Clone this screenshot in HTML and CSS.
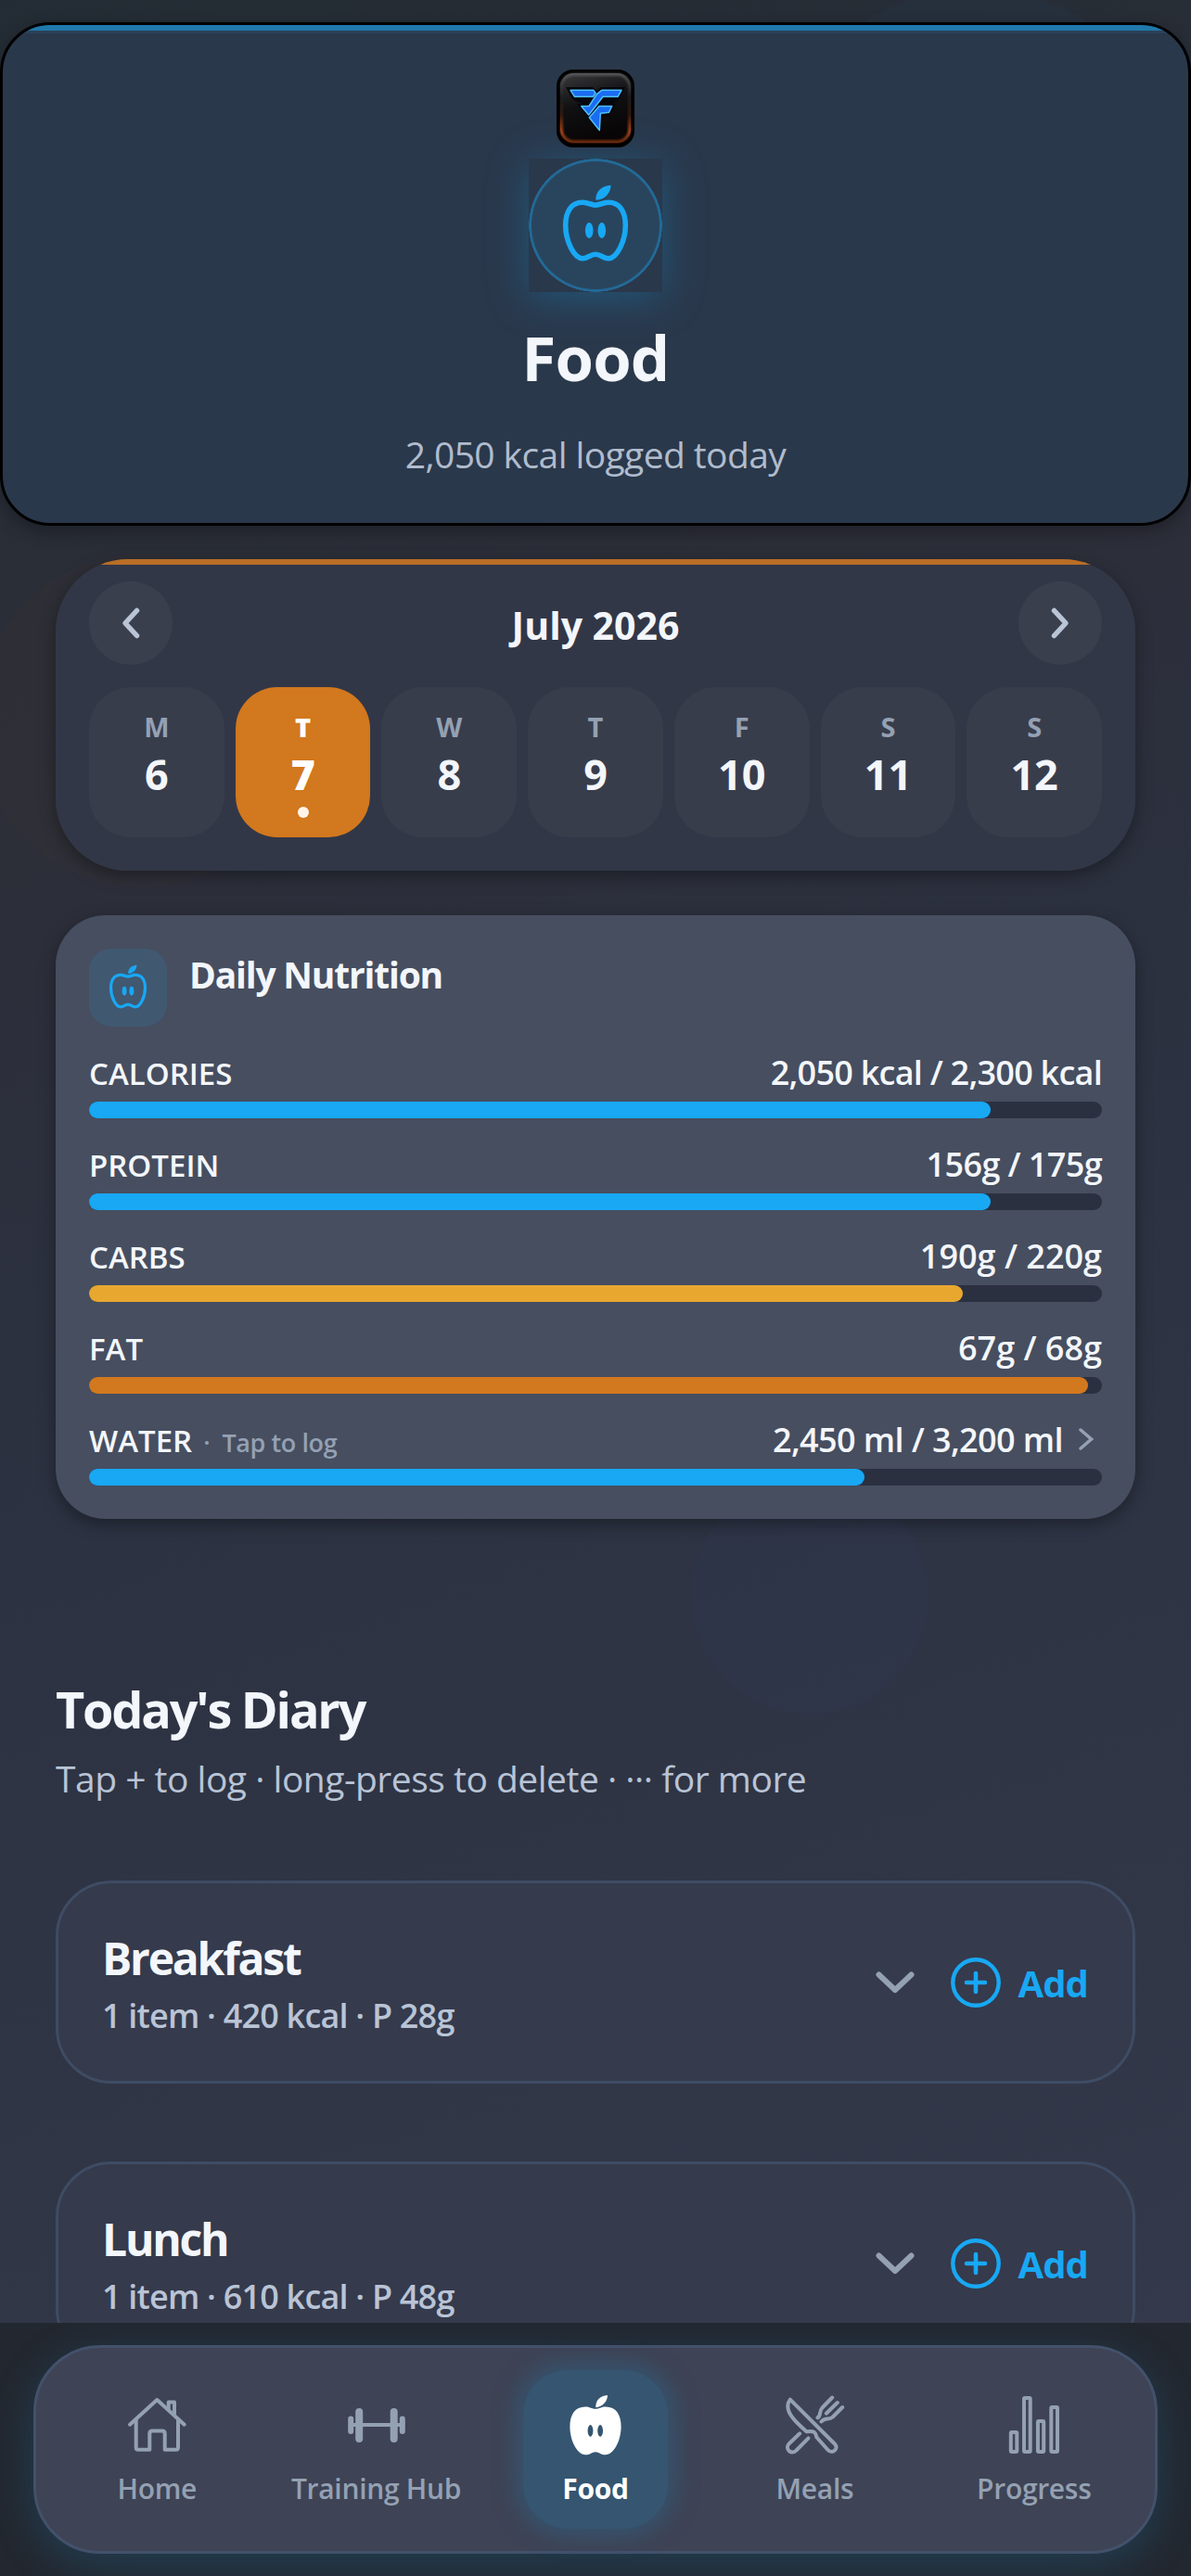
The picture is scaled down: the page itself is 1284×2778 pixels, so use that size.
FILE: index.html
```html
<!DOCTYPE html>
<html lang="en">
  <head>
    <meta charset="UTF-8" />
    <title>Food</title>
    <link rel="stylesheet" href="styles.css">
  </head>

  <body>
    <svg class="sprite">
      <symbol id="apple" viewBox="0 3 84 96">
        <path d="M42 29.3C46 29.3 50 26.3 56 26.3C68 26.3 74.3 36 74.3 51C74.3 68 65 86.7 56 86.7C50 86.7 48 82.3 42 82.3C36 82.3 34 86.7 28 86.7C19 86.7 9.7 68 9.7 51C9.7 36 16 26.3 28 26.3C34 26.3 38 29.3 42 29.3Z" fill="none" stroke="currentColor" stroke-width="5.6" />
        <path d="M42.3 23.7C42 15 48 8.5 58.5 7.8C58.5 16 52 24 42.3 23.7Z" fill="currentColor" />
        <ellipse cx="35.2" cy="56.5" rx="4.3" ry="8.4" fill="currentColor" />
        <ellipse cx="48.8" cy="56.5" rx="4.3" ry="8.4" fill="currentColor" />
      </symbol>
      <symbol id="down" viewBox="0 0 42 24">
        <path d="M3.5 3.5L21 20L38.5 3.5" fill="none" stroke="currentColor" stroke-width="6" stroke-linecap="round" stroke-linejoin="round" />
      </symbol>
      <symbol id="plus" viewBox="0 0 54 54">
        <circle cx="27" cy="27" r="24.7" fill="none" stroke="currentColor" stroke-width="4.4" />
        <path d="M27 17V37M17 27H37" fill="none" stroke="currentColor" stroke-width="4.6" stroke-linecap="round" />
      </symbol>
    </svg>

    <div class="screen">
      <div class="orb orb-blue"></div>
      <div class="orb orb-orange"></div>
      <div class="orb orb-purple"></div>

      <header class="hero">
        <svg class="logo" viewBox="0 0 84 84">
          <defs>
            <linearGradient id="plate" x1="0" y1="0" x2="0.3" y2="1">
              <stop offset="0" stop-color="#3a3a3c" />
              <stop offset="0.5" stop-color="#101012" />
              <stop offset="1" stop-color="#080506" />
            </linearGradient>
            <linearGradient id="rim" x1="0" y1="0" x2="0" y2="1">
              <stop offset="0" stop-color="#5a5a5c" />
              <stop offset="0.35" stop-color="#1c1c1e" />
              <stop offset="0.6" stop-color="#3a1a0c" />
              <stop offset="0.85" stop-color="#c4501c" />
              <stop offset="1" stop-color="#7a3010" />
            </linearGradient>
            <filter id="soft" x="-20%" y="-20%" width="140%" height="140%">
              <feGaussianBlur stdDeviation="1.3" />
            </filter>
          </defs>
          <rect width="84" height="84" rx="18" fill="#000" />
          <rect x="4" y="4" width="76" height="75" rx="14" fill="url(#plate)" />
          <rect x="5.5" y="5.5" width="73" height="72" rx="13" fill="none" stroke="url(#rim)" stroke-width="2.500" filter="url(#soft)" />
          <rect x="4.500" y="4.500" width="75" height="74" rx="14" fill="none" stroke="url(#rim)" stroke-width="0.8" />
          <path d="M10 19H39L43.500 23L48 19H74L68 32L60 37H65L58 49L50 50L47 68L22 37H28L17 32Z" fill="#05070c" />
          <g fill="#1a6cf2" stroke="#4fc0ff" stroke-width="1.500" stroke-linejoin="round">
            <path d="M15 22.300H40L42 25.500L39.300 29.300H19.500Z" />
            <path d="M48.700 22.300H70L66 29.300H50L34.700 49L26.700 39.500H35L43.300 26.700Z" />
            <path d="M46 39.500H59.700L56.300 46.300L47.300 47.300L46.300 65.500L35.300 51.700Z" />
          </g>
        </svg>
        <div class="hero-icon"><svg><use href="#apple" /></svg></div>
        <h1>Food</h1>
        <p>2,050 kcal logged today</p>
      </header>

      <section class="calendar">
        <div class="month">
          <button class="arrow">
            <svg viewBox="0 0 90 90"><path d="M51.500 31.500L39 45L51.500 58.500" /></svg>
          </button>
          <h2>July 2026</h2>
          <button class="arrow">
            <svg viewBox="0 0 90 90"><path d="M38.500 31.500L51 45L38.500 58.500" /></svg>
          </button>
        </div>
        <ul class="days">
          <li><span>M</span><b>6</b></li>
          <li class="selected"><span>T</span><b>7</b><i></i></li>
          <li><span>W</span><b>8</b></li>
          <li><span>T</span><b>9</b></li>
          <li><span>F</span><b>10</b></li>
          <li><span>S</span><b>11</b></li>
          <li><span>S</span><b>12</b></li>
        </ul>
      </section>

      <section class="nutrition">
        <div class="nutrition-head">
          <div class="badge"><svg><use href="#apple" /></svg></div>
          <h2>Daily Nutrition</h2>
        </div>
        <div class="macro calories">
          <div class="macro-text"><span>CALORIES</span><b>2,050 kcal / 2,300 kcal</b></div>
          <div class="track"><div class="fill blue" style="width: 89%"></div></div>
        </div>
        <div class="macro protein">
          <div class="macro-text"><span>PROTEIN</span><b>156g / 175g</b></div>
          <div class="track"><div class="fill blue" style="width: 89%"></div></div>
        </div>
        <div class="macro">
          <div class="macro-text"><span>CARBS</span><b>190g / 220g</b></div>
          <div class="track"><div class="fill yellow" style="width: 86.3%"></div></div>
        </div>
        <div class="macro">
          <div class="macro-text"><span>FAT</span><b>67g / 68g</b></div>
          <div class="track"><div class="fill orange" style="width: 98.6%"></div></div>
        </div>
        <div class="macro water">
          <div class="macro-text">
            <span>WATER</span><small>·&nbsp; Tap to log</small>
            <b>2,450 ml / 3,200 ml</b>
            <svg class="more" viewBox="0 0 16 24"><path d="M2 2L13.500 12L2 22" /></svg>
          </div>
          <div class="track"><div class="fill blue" style="width: 76.6%"></div></div>
        </div>
      </section>

      <section class="diary">
        <h2>Today's Diary</h2>
        <p>Tap + to log · long-press to delete · ··· for more</p>
        <article class="meal">
          <div class="meal-text">
            <h3>Breakfast</h3>
            <span>1 item · 420 kcal · P 28g</span>
          </div>
          <svg class="down"><use href="#down" /></svg>
          <svg class="plus"><use href="#plus" /></svg>
          <b>Add</b>
        </article>
        <article class="meal">
          <div class="meal-text">
            <h3>Lunch</h3>
            <span>1 item · 610 kcal · P 48g</span>
          </div>
          <svg class="down"><use href="#down" /></svg>
          <svg class="plus"><use href="#plus" /></svg>
          <b>Add</b>
        </article>
      </section>

      <nav class="tabs">
        <div class="tabbar">
          <a class="tab">
            <svg viewBox="0 0 66 66">
              <path d="M4 32.700L33.300 6L62.700 32.700" />
              <path d="M10.700 28V57.500Q10.700 59.700 13 59.700H25.300V42.500Q25.300 39.500 28.300 39.500H38.700Q41.700 39.500 41.700 42.500V59.700H53.700Q56 59.700 56 57.500V28" />
              <path d="M45.700 16V8.500H52V22.500" />
            </svg>
            <span>Home</span>
          </a>
          <a class="tab">
            <svg viewBox="0 0 66 66">
              <path d="M5 33H61" />
              <path d="M5.200 26.500V40M60.800 26.500V40" stroke-width="6" class="plate-small" />
              <path d="M14.200 19V48M51.700 19V48" class="plate-big" />
            </svg>
            <span>Training Hub</span>
          </a>
          <a class="tab active">
            <svg viewBox="0 6.400 84 84" class="solid">
              <path d="M42 26.500C47 26.500 50 23.500 56 23.500C70 23.500 77.100 34 77.100 51C77.100 70 67 89.500 56 89.500C49 89.500 47 85.500 42 85.500C37 85.500 35 89.500 28 89.500C17 89.500 6.900 70 6.900 51C6.900 34 14 23.500 28 23.500C34 23.500 37 26.500 42 26.500Z" />
              <path d="M42.300 24.500C42 15 48 8.500 58.500 7.800C58.500 16 52 24 42.300 24.500Z" />
              <ellipse class="seed" cx="35" cy="56.500" rx="3.700" ry="8" />
              <ellipse class="seed" cx="48.500" cy="56.500" rx="3.700" ry="8" />
            </svg>
            <span>Food</span>
          </a>
          <a class="tab">
            <svg viewBox="0 0 66 66">
              <path d="M6.800 5.700C3 11 3 17 9.500 25.300C13 30 18.500 35 24.500 40.300C28 40 30.500 39.500 32.800 41C35 42.500 34.500 44.500 35.500 46.500L47.500 60C52 65 59.500 59 55.300 54Z" />
              <path d="M17.200 42.300L5.500 53.500C0.500 59 8.500 66 13.500 60.500L26.500 47.300" />
              <path d="M36.500 25.300C40.500 23 37.500 19 41.500 14.500L52.200 3.500M57.800 9L45.800 20.700M63.200 14L52.800 24.500C48 28.500 45 24.500 40.500 29.500" />
            </svg>
            <span>Meals</span>
          </a>
          <a class="tab">
            <svg viewBox="0 0 66 66">
              <rect x="7.800" y="41" width="6.500" height="21" rx="1" />
              <rect x="22" y="4" width="6.700" height="58" rx="1" />
              <rect x="36.900" y="29" width="6.300" height="33" rx="1" />
              <rect x="51.300" y="14" width="6.700" height="48" rx="1" />
            </svg>
            <span>Progress</span>
          </a>
        </div>
      </nav>
    </div>
  </body>
</html>
```

FILE: styles.css
```css
* {
  box-sizing: border-box;
  margin: 0;
  padding: 0;
}

body {
  font-family: "Open Sans", "Noto Sans", sans-serif;
  color: #f3f6fa;
}

.sprite {
  display: none;
}

.screen {
  position: relative;
  width: 1284px;
  height: 2778px;
  padding-top: 24px;
  overflow: hidden;
  background: linear-gradient(160deg, #232c34 0%, #2c2e38 28%, #2c3242 52%, #303646 75%, #363a4d 100%);
}

/* faint circles behind the cards */
.orb {
  position: absolute;
  border-radius: 50%;
}

.orb-blue {
  left: 827px;
  top: -12px;
  width: 450px;
  height: 450px;
  background: rgba(24, 119, 170, 0.05);
}

.orb-orange {
  left: -26px;
  top: 597px;
  width: 360px;
  height: 360px;
  background: rgba(210, 120, 30, 0.025);
}

.orb-purple {
  left: 745px;
  top: 1593px;
  width: 256px;
  height: 256px;
  background: rgba(80, 75, 150, 0.055);
}

.hero {
  position: relative;
  height: 543px;
  padding-top: 48px;
  display: flex;
  flex-direction: column;
  align-items: center;
  border: 3px solid #000;
  border-radius: 54px;
  overflow: hidden;
  background: linear-gradient(#2078ab 6px, #2b4259 6px, #2b4259 9px, #2a384b 9px);
  box-shadow: 0 6px 18px rgba(0, 0, 0, 0.3);
}

.logo {
  position: relative;
  z-index: 1;
  width: 84px;
  height: 84px;
  flex: none;
}

/* square glow round a round icon */
.hero-icon {
  width: 144px;
  height: 144px;
  margin-top: 12px;
  flex: none;
  display: flex;
  align-items: center;
  justify-content: center;
  color: #18a8f4;
  background: radial-gradient(circle closest-side, #29455e 68.500px, #226a97 69.500px, #226a97 71.500px, #2a384b 72px);
  box-shadow: 0 6px 42px rgba(24, 130, 190, 0.42);
}

.hero-icon svg {
  width: 84px;
  height: 96px;
}

.hero h1 {
  margin-top: 30px;
  font-size: 67px;
  line-height: 80px;
  font-weight: 700;
  letter-spacing: -0.8px;
}

.hero p {
  margin-top: 40px;
  font-size: 39px;
  line-height: 50px;
  letter-spacing: -0.6px;
  color: #b0bccd;
}

.calendar {
  position: relative;
  height: 336px;
  margin: 36px 60px 0;
  padding: 24px 36px 36px;
  border-radius: 78px;
  background: linear-gradient(#ba6e26 6px, #323747 6px);
  box-shadow: 0 6px 18px rgba(0, 0, 0, 0.35);
}

.month {
  display: flex;
  justify-content: space-between;
  align-items: center;
  height: 90px;
}

.month h2 {
  padding-top: 4px;
  font-size: 41px;
  font-weight: 700;
}

.arrow {
  width: 90px;
  height: 90px;
  border: none;
  border-radius: 50%;
  background: #3a3f4e;
}

.arrow svg {
  display: block;
}

.arrow path {
  fill: none;
  stroke: #b9c4d6;
  stroke-width: 5.5;
  stroke-linecap: round;
  stroke-linejoin: round;
}

.days {
  display: grid;
  grid-template-columns: repeat(7, 1fr);
  gap: 12px;
  margin-top: 24px;
  list-style: none;
}

.days li {
  display: flex;
  flex-direction: column;
  align-items: center;
  height: 162px;
  padding-top: 23px;
  border-radius: 45px;
  background: #383d4c;
}

.days span {
  font-size: 29px;
  line-height: 40px;
  font-weight: 700;
  color: #94a1b3;
}

.days b {
  margin-top: 4px;
  font-size: 45px;
  line-height: 54px;
}

.days i {
  width: 12px;
  height: 12px;
  margin-top: 8px;
  border-radius: 50%;
  background: #fff3ea;
}

.days .selected {
  background: #d2781e;
}

.days .selected span,
.days .selected b {
  color: #fff;
  font-weight: 800;
}

.nutrition {
  position: relative;
  height: 651px;
  margin: 48px 60px 0;
  padding: 36px;
  border-radius: 54px;
  background: #464e60;
  box-shadow: 0 6px 18px rgba(0, 0, 0, 0.35);
}

.nutrition-head {
  display: flex;
  gap: 24px;
  height: 84px;
}

.nutrition-head h2 {
  margin-top: 4px;
  font-size: 39px;
  line-height: 48px;
  font-weight: 700;
  letter-spacing: -1.2px;
}

.badge {
  width: 84px;
  height: 84px;
  display: flex;
  align-items: center;
  justify-content: center;
  border-radius: 24px;
  color: #18a8f4;
  background: #415871;
}

.badge svg {
  width: 48px;
  height: 55px;
}

.macro {
  margin-top: 25px;
}

.macro-text {
  display: flex;
  align-items: baseline;
  height: 49px;
  padding-top: 1px;
  line-height: 48px;
  font-weight: 600;
}

.macro-text span {
  font-size: 33px;
}

.macro-text small {
  margin-left: 12px;
  font-size: 27px;
  letter-spacing: -0.4px;
  color: #94a1b3;
}

.macro-text b {
  margin-left: auto;
  font-size: 36px;
  font-weight: 600;
}

.calories b {
  letter-spacing: -0.75px;
}

.protein b {
  letter-spacing: -0.6px;
}

.water b {
  letter-spacing: -0.6px;
}

.more {
  width: 16px;
  height: 24px;
  margin: -3px 9px 0 17px;
  align-self: center;
  fill: none;
  stroke: #94a1b3;
  stroke-width: 3.5;
  stroke-linecap: round;
}

.track {
  height: 18px;
  margin-top: 7px;
  border-radius: 9px;
  background: #2b3040;
}

.fill {
  height: 100%;
  border-radius: 9px;
}

.blue {
  background: #18a8f4;
}

.yellow {
  background: #e8a830;
}

.orange {
  background: #d2781e;
}

.diary {
  position: relative;
  padding: 173px 60px 0;
}

.diary h2 {
  font-size: 54px;
  line-height: 64px;
  font-weight: 700;
  letter-spacing: -2.2px;
}

.diary p {
  margin-top: 18px;
  margin-bottom: 85px;
  font-size: 39px;
  line-height: 50px;
  letter-spacing: -0.5px;
  color: #b9c4d6;
}

.meal {
  display: flex;
  align-items: center;
  height: 219px;
  margin-bottom: 84px;
  padding: 0 48px 0 47px;
  border: 3px solid #3e4c64;
  border-radius: 60px;
  background: #353a4c;
}

.meal-text {
  flex: 1;
  padding-top: 4px;
}

.meal h3 {
  font-size: 48px;
  line-height: 60px;
  font-weight: 700;
  letter-spacing: -2.2px;
}

.meal span {
  display: block;
  margin-top: 9px;
  font-size: 36px;
  line-height: 46px;
  font-weight: 600;
  letter-spacing: -0.8px;
  color: #b9c4d6;
}

.down {
  width: 42px;
  height: 24px;
  margin-right: 39px;
  color: #94a1b3;
}

.plus {
  width: 54px;
  height: 54px;
  margin-right: 18px;
  color: #18a8f4;
}

.meal b {
  padding-top: 2px;
  font-size: 40px;
  letter-spacing: -0.9px;
  color: #18a8f4;
}

.tabs {
  position: absolute;
  left: 0;
  bottom: 0;
  width: 100%;
  height: 273px;
  padding: 24px 36px;
  overflow: hidden;
  background: #23272f;
}

.tabbar {
  display: grid;
  grid-template-columns: repeat(5, minmax(0, 1fr));
  height: 225px;
  padding: 24px 12px;
  border: 3px solid #43516b;
  border-radius: 72px;
  background: #3e4355;
  box-shadow: 0 12px 48px rgba(30, 150, 215, 0.22);
}

.tab {
  display: flex;
  flex-direction: column;
  align-items: center;
  margin: 0 40px;
  padding-top: 26px;
  font-size: 30px;
  line-height: 40px;
  font-weight: 600;
  letter-spacing: -0.3px;
  white-space: nowrap;
  color: #94a1b3;
}

.tab svg {
  width: 66px;
  height: 66px;
  flex: none;
  fill: none;
  stroke: #94a1b3;
  stroke-width: 4;
  stroke-linecap: round;
  stroke-linejoin: round;
}

.tab span {
  display: flex;
  justify-content: center;
  margin-top: 16px;
}

.active {
  border-radius: 48px;
  color: #fff;
  font-weight: 700;
  background: #355570;
  box-shadow: 0 0 24px 7px #355570;
}

.plate-small {
  stroke-width: 6;
}

.plate-big {
  stroke-width: 8;
}

.tab .solid {
  fill: #fff;
  stroke: none;
}

.solid .seed {
  fill: #355570;
}
```
